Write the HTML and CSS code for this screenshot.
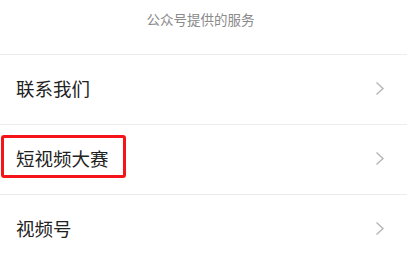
FILE: index.html
```html
<!DOCTYPE html>
<html lang="zh-CN">
<head>
<meta charset="utf-8">
<title>公众号提供的服务</title>
<link rel="stylesheet" href="styles.css">
</head>
<body>
<div class="page">
  <div class="header">公众号提供的服务</div>
  <ul class="list">
    <li class="row">
      <span class="label">联系我们</span>
      <svg class="chev" width="10" height="15" viewBox="0 0 10 15"><polyline points="1.5,1.5 8,7.5 1.5,13.5" fill="none" stroke="#b5b5b5" stroke-width="1.4"/></svg>
    </li>
    <li class="row">
      <span class="label highlighted">短视频大赛</span>
      <svg class="chev" width="10" height="15" viewBox="0 0 10 15"><polyline points="1.5,1.5 8,7.5 1.5,13.5" fill="none" stroke="#b5b5b5" stroke-width="1.4"/></svg>
    </li>
    <li class="row">
      <span class="label">视频号</span>
      <svg class="chev" width="10" height="15" viewBox="0 0 10 15"><polyline points="1.5,1.5 8,7.5 1.5,13.5" fill="none" stroke="#b5b5b5" stroke-width="1.4"/></svg>
    </li>
  </ul>
</div>
</body>
</html>
```
FILE: styles.css
```css
html, body {
  margin: 0;
  padding: 0;
  background: #ffffff;
}
body {
  font-family: "Noto Sans CJK SC", "Noto Sans", sans-serif;
  width: 407px;
  height: 256px;
  overflow: hidden;
}
.header {
  height: 54px;
  box-sizing: border-box;
  padding-top: 9px;
  padding-right: 6px;
  text-align: center;
  font-size: 13.5px;
  line-height: 20px;
  color: #8a8a8a;
}
.list {
  list-style: none;
  margin: 0;
  padding: 0;
}
.row {
  box-sizing: border-box;
  height: 70px;
  border-top: 1px solid #ececec;
  display: flex;
  align-items: center;
  justify-content: space-between;
  padding: 0 22px 3px 16px;
}
.label {
  position: relative;
  font-size: 18.5px;
  line-height: 24px;
  color: #222222;
}
.highlighted::after {
  content: "";
  position: absolute;
  left: -15px;
  right: -17px;
  top: -11px;
  bottom: -8px;
  border: 3px solid #f5141a;
  border-radius: 3px;
}
.chev {
  display: block;
}
```
